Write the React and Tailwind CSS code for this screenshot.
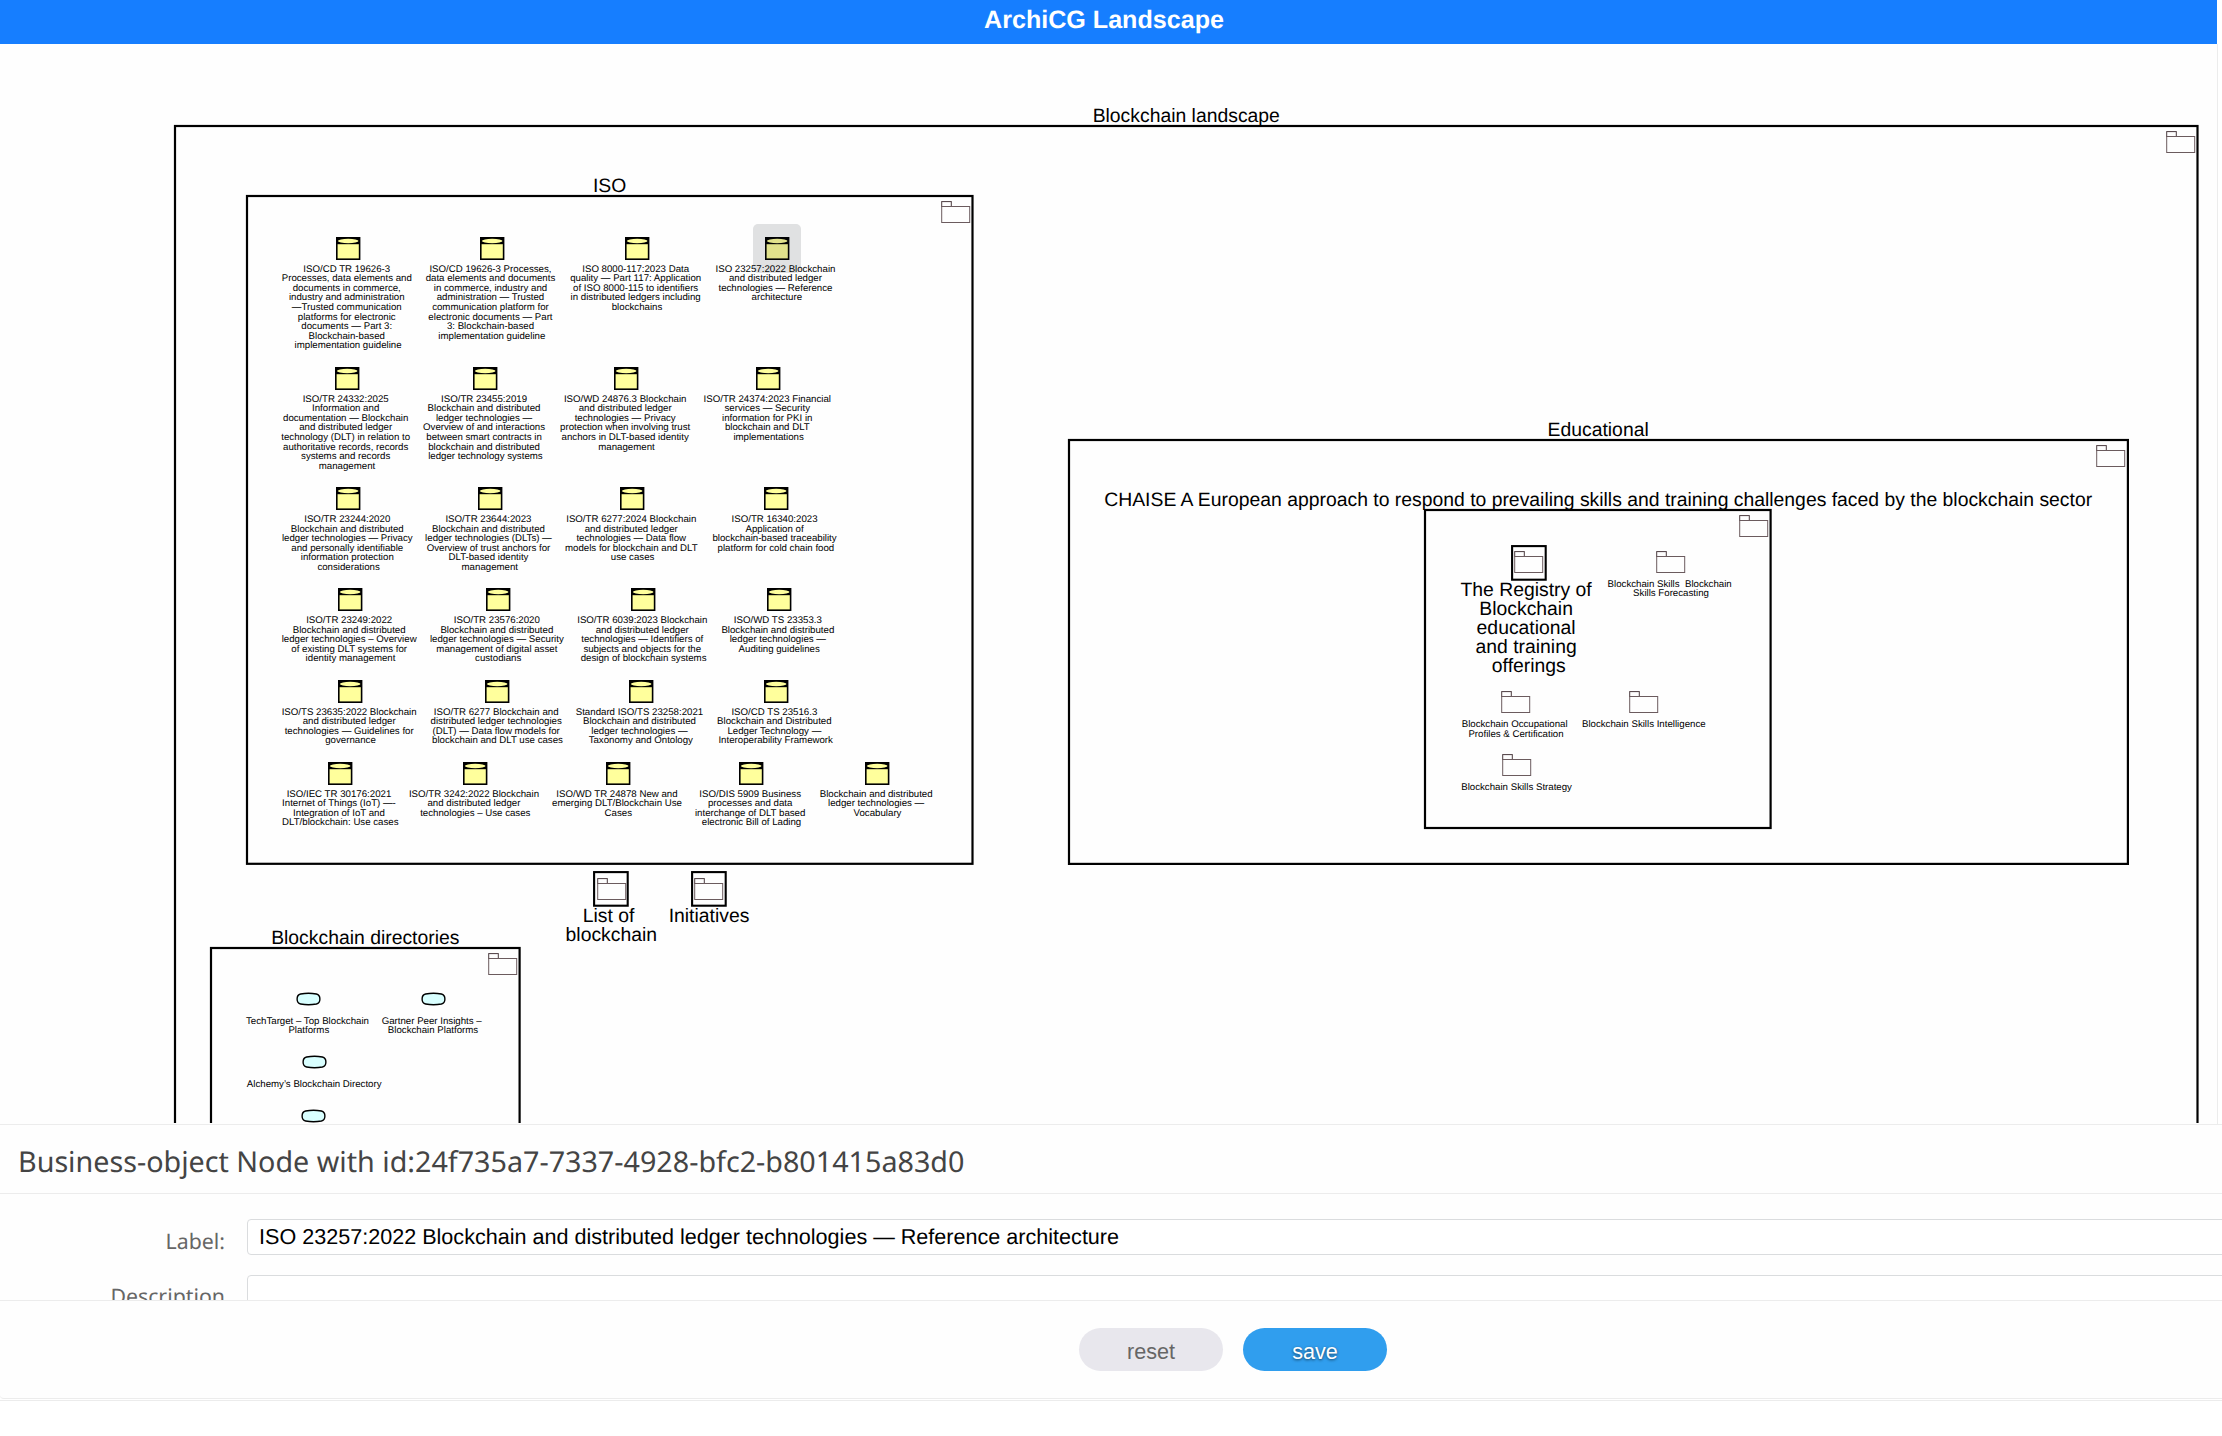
import React from "react";

const OBJECTS = [
  [348.1, 248.3, ["ISO/CD TR 19626-3", "Processes, data elements and", "documents in commerce,", "industry and administration", "—Trusted communication", "platforms for electronic", "documents — Part 3:", "Blockchain-based", "implementation guideline"]],
  [491.8, 248.3, ["ISO/CD 19626-3 Processes,", "data elements and documents", "in commerce, industry and", "administration — Trusted", "communication platform for", "electronic documents — Part", "3: Blockchain-based", "implementation guideline"]],
  [637, 248.3, ["ISO 8000-117:2023 Data", "quality — Part 117: Application", "of ISO 8000-115 to identifiers", "in distributed ledgers including", "blockchains"]],
  [776.8, 248.3, ["ISO 23257:2022 Blockchain", "and distributed ledger", "technologies — Reference", "architecture"], true],
  [347, 378.3, ["ISO/TR 24332:2025", "Information and", "documentation — Blockchain", "and distributed ledger", "technology (DLT) in relation to", "authoritative records, records", "systems and records", "management"]],
  [485.4, 378.3, ["ISO/TR 23455:2019", "Blockchain and distributed", "ledger technologies —", "Overview of and interactions", "between smart contracts in", "blockchain and distributed", "ledger technology systems"]],
  [626.5, 378.3, ["ISO/WD 24876.3 Blockchain", "and distributed ledger", "technologies — Privacy", "protection when involving trust", "anchors in DLT-based identity", "management"]],
  [768.6, 378.3, ["ISO/TR 24374:2023 Financial", "services — Security", "information for PKI in", "blockchain and DLT", "implementations"]],
  [348.6, 498.6, ["ISO/TR 23244:2020", "Blockchain and distributed", "ledger technologies — Privacy", "and personally identifiable", "information protection", "considerations"]],
  [489.8, 498.6, ["ISO/TR 23644:2023", "Blockchain and distributed", "ledger technologies (DLTs) —", "Overview of trust anchors for", "DLT-based identity", "management"]],
  [632.6, 498.6, ["ISO/TR 6277:2024 Blockchain", "and distributed ledger", "technologies — Data flow", "models for blockchain and DLT", "use cases"]],
  [775.9, 498.6, ["ISO/TR 16340:2023", "Application of", "blockchain-based traceability", "platform for cold chain food"]],
  [350.5, 599.7, ["ISO/TR 23249:2022", "Blockchain and distributed", "ledger technologies – Overview", "of existing DLT systems for", "identity management"]],
  [498.2, 599.7, ["ISO/TR 23576:2020", "Blockchain and distributed", "ledger technologies — Security", "management of digital asset", "custodians"]],
  [643.6, 599.7, ["ISO/TR 6039:2023 Blockchain", "and distributed ledger", "technologies — Identifiers of", "subjects and objects for the", "design of blockchain systems"]],
  [779.2, 599.7, ["ISO/WD TS 23353.3", "Blockchain and distributed", "ledger technologies —", "Auditing guidelines"]],
  [350.5, 691.3, ["ISO/TS 23635:2022 Blockchain", "and distributed ledger", "technologies — Guidelines for", "governance"]],
  [497.5, 691.3, ["ISO/TR 6277 Blockchain and", "distributed ledger technologies", "(DLT) — Data flow models for", "blockchain and DLT use cases"]],
  [640.8, 691.3, ["Standard ISO/TS 23258:2021", "Blockchain and distributed", "ledger technologies —", "Taxonomy and Ontology"]],
  [775.7, 691.3, ["ISO/CD TS 23516.3", "Blockchain and Distributed", "Ledger Technology —", "Interoperability Framework"]],
  [340.3, 773.3, ["ISO/IEC TR 30176:2021", "Internet of Things (IoT) —-", "Integration of IoT and", "DLT/blockchain: Use cases"]],
  [475.3, 773.3, ["ISO/TR 3242:2022 Blockchain", "and distributed ledger", "technologies – Use cases"]],
  [618.3, 773.3, ["ISO/WD TR 24878 New and", "emerging DLT/Blockchain Use", "Cases"]],
  [751.5, 773.3, ["ISO/DIS 5909 Business", "processes and data", "interchange of DLT based", "electronic Bill of Lading"]],
  [877.5, 773.3, ["Blockchain and distributed", "ledger technologies —", "Vocabulary"]],
];

const FOLDERS = [
  [1671, 551, ["Blockchain Skills  Blockchain", "Skills Forecasting"]],
  [1516, 691.3, ["Blockchain Occupational", "Profiles & Certification"]],
  [1643.8, 691.3, ["Blockchain Skills Intelligence"]],
  [1516.6, 754.3, ["Blockchain Skills Strategy"]],
];

const SERVICES = [
  [308.8, 999.4, ["TechTarget – Top Blockchain", "Platforms"]],
  [433, 999.4, ["Gartner Peer Insights –", "Blockchain Platforms"]],
  [314.2, 1062.3, ["Alchemy’s Blockchain Directory"]],
  [313.1, 1115.7, []],
];

// Group frames: centre lines of left, top, right and bottom edges, plus title.
const GROUPS = [
  [175, 125.5, 2197.5, 1200, "Blockchain landscape"],
  [246.8, 195.6, 972.3, 863.4, "ISO"],
  [1068.7, 439.5, 2127.6, 863.4, "Educational"],
  [1425.4, 509.6, 1771, 827.6, "CHAISE A European approach to respond to prevailing skills and training challenges faced by the blockchain sector"],
  [211, 947.6, 519.6, 1200, "Blockchain directories"],
];

const COLLAPSED = [
  [611.3, 871.4, ["List of", "blockchain"]],
  [709, 871.4, ["Initiatives"]],
  [1528.8, 544.8, ["The Registry of", "Blockchain", "educational", "and training", "offerings"]],
];

function Lines({ x, y, lines, large }) {
  return (
    <div
      className={
        "absolute flex w-0 flex-col items-center whitespace-pre text-black " +
        (large ? "text-[19.37px] leading-[19.2px]" : "text-[9.68px] leading-[9.6px]")
      }
      style={{ left: x, top: y }}
    >
      {lines.map((line, i) => (
        <span key={i}>{i < lines.length - 1 ? line + " " : line}</span>
      ))}
    </div>
  );
}

function Folder({ x, y }) {
  return (
    <svg className="absolute" style={{ left: x, top: y }} width="30" height="23" fill="none" stroke="#6b5b5e" strokeWidth="1">
      <rect x="0.7" y="0.6" width="9.6" height="4.9" stroke="#4a3a3e" />
      <rect x="0.7" y="5.5" width="28" height="16" />
    </svg>
  );
}

function Group({ box }) {
  const [l, t, r, b, title] = box;
  return (
    <>
      <svg className="absolute" style={{ left: l - 2, top: t - 2 }} width={r - l + 4} height={b - t + 4}>
        <rect x="2" y="2" width={r - l} height={b - t} fill="none" stroke="#000" strokeWidth="2.2" />
      </svg>
      <Folder x={r - 31.8} y={t + 5.3} />
      <Lines x={(l + r) / 2} y={t - 18.6} lines={[title]} large />
    </>
  );
}

function Collapsed({ x, y, lines }) {
  return (
    <>
      <svg className="absolute" style={{ left: x - 18, top: y }} width="36" height="36">
        <rect x="1.1" y="1.1" width="33.6" height="33.6" fill="none" stroke="#000" strokeWidth="2.1" />
      </svg>
      <Folder x={x - 14.8} y={y + 6.3} />
      <Lines x={x} y={y + 35.7} lines={lines} large />
    </>
  );
}

function BusinessObject({ x, y, lines, selected }) {
  return (
    <>
      <svg className="absolute" style={{ left: x - 12.2, top: y - 11.5 }} width="25" height="24">
        <rect x="0.8" y="0.8" width="22.8" height="21.4" fill="#ffff9c" stroke="#000" strokeWidth="1.6" />
        <rect x="0.4" y="0.2" width="23.6" height="7" fill="#000" />
        <ellipse cx="12.2" cy="4" rx="10.3" ry="2.2" fill="#ffff9c" />
      </svg>
      {selected && (
        <div className="absolute h-[49px] w-12 rounded-[5px] bg-[#0b1017]/12" style={{ left: x - 24, top: y - 24.7 }} />
      )}
      <Lines x={x} y={y + 16.4} lines={lines} />
    </>
  );
}

function Service({ x, y, lines }) {
  return (
    <>
      <svg className="absolute" style={{ left: x - 12.5, top: y - 7 }} width="25" height="14">
        <path
          d="M4.6 2 Q12.5 0.4 20.4 2 C22.6 2.5 23.9 4.4 23.9 7 C23.9 9.6 22.6 11.5 20.4 12 Q12.5 13.6 4.6 12 C2.2 11.5 1.1 9.6 1.1 7 C1.1 4.4 2.2 2.5 4.6 2Z"
          fill="#d9ffff"
          stroke="#000"
          strokeWidth="1.4"
        />
      </svg>
      <Lines x={x} y={y + 17.4} lines={lines} />
    </>
  );
}

function Diagram() {
  return (
    <div className="relative -mt-11 h-[1123px] w-[2217px] overflow-hidden [text-rendering:geometricPrecision]">
      {GROUPS.map((g, i) => <Group key={i} box={g} />)}
      {OBJECTS.map(([x, y, lines, selected], i) => <BusinessObject key={i} x={x} y={y} lines={lines} selected={selected} />)}
      {COLLAPSED.map(([x, y, lines], i) => <Collapsed key={i} x={x} y={y} lines={lines} />)}
      {FOLDERS.map(([x, y, lines], i) => (
        <React.Fragment key={i}>
          <Folder x={x - 14.8} y={y - 0.5} />
          <Lines x={x} y={y + 28.7} lines={lines} />
        </React.Fragment>
      ))}
      {SERVICES.map(([x, y, lines], i) => <Service key={i} x={x} y={y} lines={lines} />)}
    </div>
  );
}

export default function App() {
  return (
    <div className="flex h-[1436px] w-[2222px] flex-col overflow-hidden bg-white font-['Liberation_Sans',Arial,sans-serif]">
      <header className="relative z-10 flex h-11 w-[2217px] shrink-0 justify-center bg-[#167eff] pr-[9px] text-[25.1px] leading-[40px] font-bold text-white [text-rendering:geometricPrecision]">
        ArchiCG Landscape
      </header>
      <main className="h-[1080px] w-[2218px] shrink-0 border-r border-[#ececec] bg-[#fefefe]">
        <Diagram />
      </main>
      <section className="flex h-[275px] w-[2300px] shrink-0 flex-col rounded-bl border-y border-[#ececec] bg-[#fefefe] [text-rendering:geometricPrecision]">
        <h2 className="h-[69px] shrink-0 border-b border-[#ececec] pl-[18px] font-['Noto_Sans','Open_Sans',sans-serif] text-[28.7px] leading-[73px] text-[#444]">
          Business-object Node with id:24f735a7-7337-4928-bfc2-b801415a83d0
        </h2>
        <form className="flex h-[106px] shrink-0 flex-col gap-5 overflow-hidden pt-[25px]">
          <div className="flex h-9 shrink-0 gap-[22px]">
            <label className="w-[225px] pt-[5px] text-right font-['Noto_Sans','Open_Sans',sans-serif] text-[21.3px] leading-9 text-[#666]">Label:</label>
            <div className="flex-1 rounded border border-[#dadcde] bg-white pl-[11px] text-[21.58px] leading-[34px] text-black">
              ISO 23257:2022 Blockchain and distributed ledger technologies — Reference architecture
            </div>
          </div>
          <div className="flex h-20 shrink-0 gap-[22px]">
            <label className="w-[225px] pt-1 text-right font-['Noto_Sans','Open_Sans',sans-serif] text-[21.3px] leading-9 text-[#666]">Description</label>
            <div className="flex-1 rounded border border-[#dadcde] bg-white" />
          </div>
        </form>
        <footer className="flex flex-1 gap-5 border-t border-[#ececec] pt-[27px] pl-[1079px]">
          <button className="h-[43px] w-36 rounded-full bg-[#e8e7ed] pt-1.5 text-[21.6px] text-[#666]">reset</button>
          <button className="h-[43px] w-36 rounded-full bg-[#309eee] pt-1.5 text-[21.6px] text-white [text-shadow:0_1px_3px_rgba(0,0,0,0.6)]">save</button>
        </footer>
      </section>
      <div className="mt-px h-px shrink-0 bg-[#ececec]" />
    </div>
  );
}
